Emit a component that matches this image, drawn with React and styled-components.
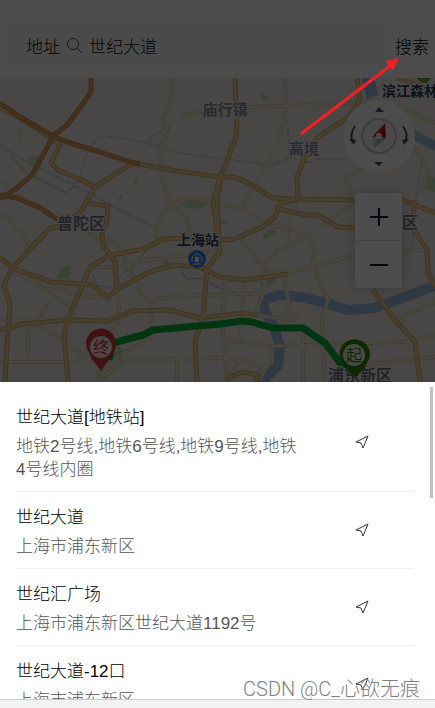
import React from "react";
import styled, { createGlobalStyle } from "styled-components";

const GlobalStyle = createGlobalStyle`
  * { box-sizing: border-box; }
  body {
    margin: 0;
    background: #fff;
    font-family: "Liberation Sans", "Noto Sans CJK SC", sans-serif;
    font-size: 17px;
    font-weight: 300;
    color: #000;
  }
`;

const Page = styled.div`
  position: relative;
  display: flex;
  flex-direction: column;
  height: 100vh;
  overflow: hidden;
`;

const Behind = styled.div`
  position: relative;
  flex: none;
`;

const Overlay = styled.div`
  position: absolute;
  inset: 0;
  background: rgba(0, 0, 0, 0.7);
`;

const Header = styled.header`
  display: flex;
  align-items: center;
  gap: 9px;
  padding: 25px 6px 13px 7px;
`;

const SearchBox = styled.label`
  display: flex;
  flex: 1;
  align-items: center;
  gap: 6px;
  min-width: 0;
  height: 40px;
  padding: 0 19px;
  border-radius: 2px;
  background: #f7f8fa;
`;

const SearchInput = styled.input`
  flex: 1;
  min-width: 0;
  padding: 0;
  border: 0;
  outline: 0;
  background: transparent;
  color: #111;
  font: inherit;
`;

const SearchButton = styled.button`
  flex: none;
  padding: 0;
  border: 0;
  background: none;
  color: #000;
  font: inherit;
`;

const MapArea = styled.div`
  position: relative;
  height: 304px;
  background: #f0eee7;
  overflow: hidden;
`;

const MapDrawing = styled.svg`
  display: block;
  width: 100%;
  height: 100%;
`;

const CompassButton = styled.button`
  position: absolute;
  top: 22px;
  right: 20px;
  width: 72px;
  height: 72px;
  padding: 0;
  border: 0;
  border-radius: 50%;
  background: #fff;
`;

const ZoomPanel = styled.div`
  position: absolute;
  top: 115px;
  right: 33px;
  display: flex;
  flex-direction: column;
  width: 47px;
  border-radius: 4px;
  background: #fff;
  box-shadow: 0 0 16px rgba(0, 0, 0, 0.2);
`;

const ZoomButton = styled.button`
  display: flex;
  align-items: center;
  justify-content: center;
  height: 47px;
  padding: 0;
  border: 0;
  background: none;
  color: #0a1430;

  & + & {
    height: 48px;
    border-top: 1px solid #ddd;
  }
`;

const ArrowDrawing = styled.svg`
  position: absolute;
  top: 52px;
  right: 32px;
  width: 108px;
  height: 86px;
`;

const Sheet = styled.main`
  position: relative;
  flex: 1;
  min-height: 0;
  padding: 10px 21px 0 16px;
  background: #fff;
  overflow: hidden;
`;

const ScrollThumb = styled.div`
  position: absolute;
  top: 5px;
  right: 2px;
  width: 3px;
  height: 111px;
  background: #c1c1c1;
`;

const Results = styled.ul`
  margin: 0;
  padding: 0;
  list-style: none;
`;

const ResultRow = styled.li`
  display: flex;
  align-items: center;
  border-bottom: 1px solid #eee;
`;

const ResultText = styled.div`
  flex: 1;
  min-width: 0;
  padding: 12px 10px 10px 0;
`;

const ResultName = styled.div`
  margin-bottom: 3px;
  line-height: 28px;
`;

const ResultAddress = styled.div`
  color: #555;
  line-height: 23px;
`;

const GoButton = styled.button`
  display: flex;
  flex: none;
  justify-content: center;
  width: 26%;
  padding: 0;
  border: 0;
  background: none;
  color: #333;
`;

const Footer = styled.footer`
  flex: none;
  height: 9px;
  border-top: 1px solid #ccc;
  background: #f1f3f3;
`;

const Watermark = styled.div`
  position: absolute;
  right: 15px;
  bottom: 5px;
  color: #808080;
  font-family: Roboto, "Noto Sans CJK SC", sans-serif;
  font-size: 20px;
  line-height: 28px;
  text-shadow: 1px 1px 0 #fff;
`;

const results = [
  { name: "世纪大道[地铁站]", address: "地铁2号线,地铁6号线,地铁9号线,地铁4号线内圈" },
  { name: "世纪大道", address: "上海市浦东新区" },
  { name: "世纪汇广场", address: "上海市浦东新区世纪大道1192号" },
  { name: "世纪大道-12口", address: "上海市浦东新区" },
];

const highways = [
  "M91 78V92L82 105L67 125L53 136L42 157L32 175L17 188L0 199",
  "M0 103L17 115L37 127L53 136L67 142L100 152L130 162L140 164",
  "M0 195L17 198L40 208L58 220",
];

const mainRoads = [
  "M0 108L20 118L43 133L60 145L51 163L58 170L77 178L95 187L80 213L60 226L50 228L12 268L0 257",
  "M95 187L133 163L177 171L220 177L213 203L217 230L220 252L207 268L203 318L195 342L197 382",
  "M88 203L108 206L106 225L102 232L103 245L115 262L117 292",
  "M235 78L236 110L237 120L236 137L222 173L217 200L219 240",
  "M215 177L235 177L252 185L272 198L295 199L355 200L403 200L435 213",
  "M357 78L360 100L347 118L318 137L305 157L297 177L298 199L280 203L275 217L262 227L235 239L215 241L190 238L163 239L143 249L108 256L90 267L80 292L68 318L64 335L68 382",
  "M275 208L305 215L318 215L338 227L355 228",
  "M415 200L412 227L427 250L428 273L435 287",
  "M12 268L53 282L92 285L107 297L120 288L147 273L173 265L200 267L220 277L245 280L288 274",
  "M12 268L4 285L10 305L7 345L5 382",
  "M0 330L23 324L68 320L107 321L133 311L170 310L200 318L242 313L258 315",
  "M373 290L395 320L415 342L420 382",
  "M225 380L242 372L258 375L256 382",
  "M398 78L415 84L435 92",
];

const streets = [
  "M172 78L173 93L163 120L165 137L159 150L162 177L170 203L160 220L155 238",
  "M170 203L187 220L191 238M170 203L193 198L213 202",
  "M0 180L23 198L50 213M0 213L10 220L20 232L30 245",
  "M285 78L286 106L283 120L282 130L265 167L242 207",
  "M180 116L215 109L248 107L285 106L348 103L372 100L398 107L435 123",
  "M215 203L245 209L267 225L287 228L307 237L315 250L312 267",
  "M352 203L307 237L278 250L263 267L265 290",
  "M265 277L312 267L355 255L422 250",
  "M297 200L287 228L288 243M242 240L263 267L283 275L293 320L258 315",
  "M415 147L428 167L422 193M362 170L346 177L351 197",
  "M75 223L100 240L117 243L133 275L143 297L152 303L152 325L150 337L117 358L97 380",
  "M12 271L27 278L83 297L110 297M27 278L68 305L80 308",
  "M50 302L28 332L28 358M0 320L33 321L43 328L80 352L97 365",
  "M0 362L70 362L87 355M97 380L127 360L220 358L250 360",
  "M177 358V382M152 300L187 295L220 295L265 293",
  "M88 267L123 267L147 260L180 256L220 250",
  "M117 292L119 305L118 322L100 350",
  "M315 270L328 300L322 320L325 382",
  "M245 277L242 313L240 340M225 277L222 320L227 382",
  "M225 340L272 346L402 342L435 335",
  "M255 315L262 297L268 270M303 328V382",
  "M365 365L435 357M398 317L435 303M399 315L405 325",
  "M225 382L242 358L265 370L260 380M272 346V365",
  "M283 322L287 305L298 320M375 150L390 170",
];

const railways = [
  "M0 145L20 158L50 173L93 195L133 217L157 228",
  "M80 177L85 157L98 136L123 138L147 143L180 153L215 158L272 165L290 157L287 120",
  "M147 143L155 133L167 132L172 122",
  "M10 155L27 173L67 193L80 180",
  "M423 157L415 203L412 247",
  "M302 162H312L316 159H345",
];

const parks = [
  "M180 205L193 199L210 203L200 209L187 208Z",
  "M28 158L40 155L36 163L30 161Z",
  "M55 279L63 266L71 266L69 278Z",
  "M262 237L269 229L277 231L266 240Z",
  "M117 344L125 350L122 361L113 361Z",
  "M98 370L108 366L113 372L105 380L96 378Z",
  "M425 180L430 175L435 178V193L424 188Z",
  "M18 131L22 129L20 142Z",
  "M134 180L137 177V183L134 184Z",
  "M260 282L268 276L279 276L272 284L262 288Z",
  "M118 200L121 194L123 196L120 202Z",
  "M117 85L127 84L126 86Z",
  "M160 263L169 260L168 267Z",
  "M218 222L230 220L225 225Z",
  "M260 98L263 93L269 98L265 102Z",
];

function Lines({ paths, edge, fill, outer, inner }) {
  return (
    <g fill="none" strokeLinejoin="round">
      <g stroke={edge} strokeWidth={outer}>
        {paths.map((d) => <path key={d} d={d} />)}
      </g>
      <g stroke={fill} strokeWidth={inner}>
        {paths.map((d) => <path key={d} d={d} />)}
      </g>
    </g>
  );
}

function CityMap() {
  return (
    <MapDrawing viewBox="0 78 435 304" preserveAspectRatio="xMidYMin slice" role="img" aria-label="上海地图">
      <rect y="78" width="435" height="304" fill="#f0eee7" />
      <g fill="#c6dfb5">
        {parks.map((d) => <path key={d} d={d} />)}
      </g>
      <g fill="none" stroke="#9dbde2" strokeLinejoin="round">
        <path d="M260 384L278 365L280 347L274 327L265 312L263 300L278 295L302 297L325 303L348 310L375 308L402 298L437 285" strokeWidth="10" />
        <path d="M367 76L373 97" strokeWidth="12" />
        <path d="M405 130L437 147" strokeWidth="9" />
        <path d="M93 274L97 285L110 288L121 275L133 265L140 258L147 250L155 245M180 268L187 280L200 278L218 287M215 287L235 292M254 288L264 294" strokeWidth="1" />
      </g>
      <g fill="none" stroke="#cfcfd2" strokeWidth="2">
        {railways.map((d) => <path key={d} d={d} />)}
      </g>
      <g fill="none" stroke="#ececea" strokeWidth="1" strokeDasharray="5 5">
        {railways.map((d) => <path key={d} d={d} />)}
      </g>
      <Lines paths={streets} edge="#e0d3b2" fill="#f5ecd2" outer="4" inner="2" />
      <Lines paths={mainRoads} edge="#d9b077" fill="#efd094" outer="5" inner="3" />
      <Lines paths={highways} edge="#cd9050" fill="#dba263" outer="5" inner="3" />

      <path
        d="M109 360L113 343L143 335L153 330L220 324L242 321L252 322L273 328L303 328L325 343L340 363L354 376"
        fill="none"
        stroke="#00b23c"
        strokeWidth="7"
        strokeLinejoin="round"
      />

      <g
        fontFamily='"Liberation Sans", "Noto Sans CJK SC", sans-serif'
        textAnchor="middle"
        fontWeight="700"
        stroke="#f4f2ec"
        strokeWidth="2"
        paintOrder="stroke"
      >
        <g fill="#8990a3" fontSize="15">
          <text x="225" y="115">庙行镇</text>
          <text x="304" y="154">高境</text>
        </g>
        <g fill="#74778b" fontSize="16">
          <text x="81" y="229">普陀区</text>
          <text x="410" y="228">区</text>
          <text x="360" y="381">浦东新区</text>
        </g>
        <g fill="#2f405c" fontSize="14">
          <text x="198" y="245">上海站</text>
          <text x="417" y="96">滨江森林公</text>
        </g>
      </g>

      <circle cx="197" cy="259" r="9" fill="#3b78e7" />
      <path d="M192 262V259A5 5 0 0 1 202 259V262M193 264H201" fill="none" stroke="#fff" strokeWidth="1" />
      <path d="M195 257H199V262H195Z" fill="#fff" />
      <circle cx="424" cy="76" r="7" fill="#55ad32" />

      <g>
        <path d="M101 371L92 359L87 349A15 15 0 1 1 115 349L110 359Z" fill="#d93a3f" />
        <circle cx="101" cy="347" r="11" fill="#f8eeee" />
        <text x="101" y="353" textAnchor="middle" fill="#d3242b" fontSize="16" fontWeight="400" fontFamily='"Noto Sans CJK SC", sans-serif'>终</text>
      </g>
      <g>
        <circle cx="357" cy="354" r="13" fill="#d93a3f" />
        <path d="M355 378L345 367L340 358A15 15 0 1 1 369 358L365 367Z" fill="#2f8500" />
        <circle cx="354" cy="355" r="11" fill="#eef4e8" />
        <text x="354" y="361" textAnchor="middle" fill="#347f10" fontSize="16" fontWeight="400" fontFamily='"Noto Sans CJK SC", sans-serif'>起</text>
      </g>
    </MapDrawing>
  );
}

function Compass() {
  return (
    <svg width="72" height="72" viewBox="0 0 72 72" fill="none" aria-hidden="true">
      <circle cx="36" cy="36" r="17" fill="#f5f6f7" stroke="#c7c9ce" strokeWidth="2" />
      <path d="M42 23L29 37L36 36Z" fill="#e51e30" />
      <path d="M42 23L43 38L36 36Z" fill="#b80f24" />
      <path d="M29 37L31 48L37 37Z" fill="#d7d9dd" />
      <path d="M31 48L43 38L36 36Z" fill="#adb1b8" />
      <circle cx="36" cy="36" r="3" fill="#f7f7f7" />
      <path d="M32 12L36 7L41 12ZM31 62L36 66L40 62Z" fill="#46516b" />
      <path d="M12 26Q6 35 10 42M60 26Q66 35 62 42" stroke="#46516b" strokeWidth="2" />
      <path d="M6 39L13 40L11 45ZM66 39L59 40L61 45Z" fill="#46516b" />
    </svg>
  );
}

function SearchIcon() {
  return (
    <svg width="17" height="17" viewBox="0 0 17 17" fill="none" stroke="#555" aria-hidden="true">
      <circle cx="7" cy="7" r="5.5" />
      <path d="M11 11L16 16" />
    </svg>
  );
}

function GoIcon() {
  return (
    <svg width="14" height="14" viewBox="0 0 14 14" fill="none" stroke="currentColor" strokeLinejoin="round" aria-hidden="true">
      <path d="M1 7L13 1L8 13L6 8Z" />
    </svg>
  );
}

function Arrow() {
  return (
    <ArrowDrawing viewBox="0 0 108 86" aria-hidden="true">
      <path d="M7 81L95 14" stroke="#f51f28" strokeWidth="3" strokeLinecap="round" />
      <path d="M104 6L98 18L94 15L91 9Z" fill="#f51f28" />
    </ArrowDrawing>
  );
}

export default function App() {
  return (
    <Page>
      <GlobalStyle />
      <Behind>
        <Header>
          <SearchBox>
            <span>地址</span>
            <SearchIcon />
            <SearchInput type="text" defaultValue="世纪大道" />
          </SearchBox>
          <SearchButton type="button">搜索</SearchButton>
        </Header>
        <MapArea>
          <CityMap />
          <CompassButton type="button" aria-label="指南针"><Compass /></CompassButton>
          <ZoomPanel>
            <ZoomButton type="button" aria-label="放大">
              <svg width="20" height="20" stroke="currentColor" strokeWidth="2" aria-hidden="true"><path d="M1 10H19M10 1V19" /></svg>
            </ZoomButton>
            <ZoomButton type="button" aria-label="缩小">
              <svg width="20" height="20" stroke="currentColor" strokeWidth="2" aria-hidden="true"><path d="M1 10H19" /></svg>
            </ZoomButton>
          </ZoomPanel>
        </MapArea>
        <Overlay />
        <Arrow />
      </Behind>
      <Sheet>
        <Results>
          {results.map((item) => (
            <ResultRow key={item.name}>
              <ResultText>
                <ResultName>{item.name}</ResultName>
                <ResultAddress>{item.address}</ResultAddress>
              </ResultText>
              <GoButton type="button" aria-label={`导航到${item.name}`}><GoIcon /></GoButton>
            </ResultRow>
          ))}
        </Results>
        <ScrollThumb />
      </Sheet>
      <Footer />
      <Watermark>CSDN @C_心欲无痕</Watermark>
    </Page>
  );
}
